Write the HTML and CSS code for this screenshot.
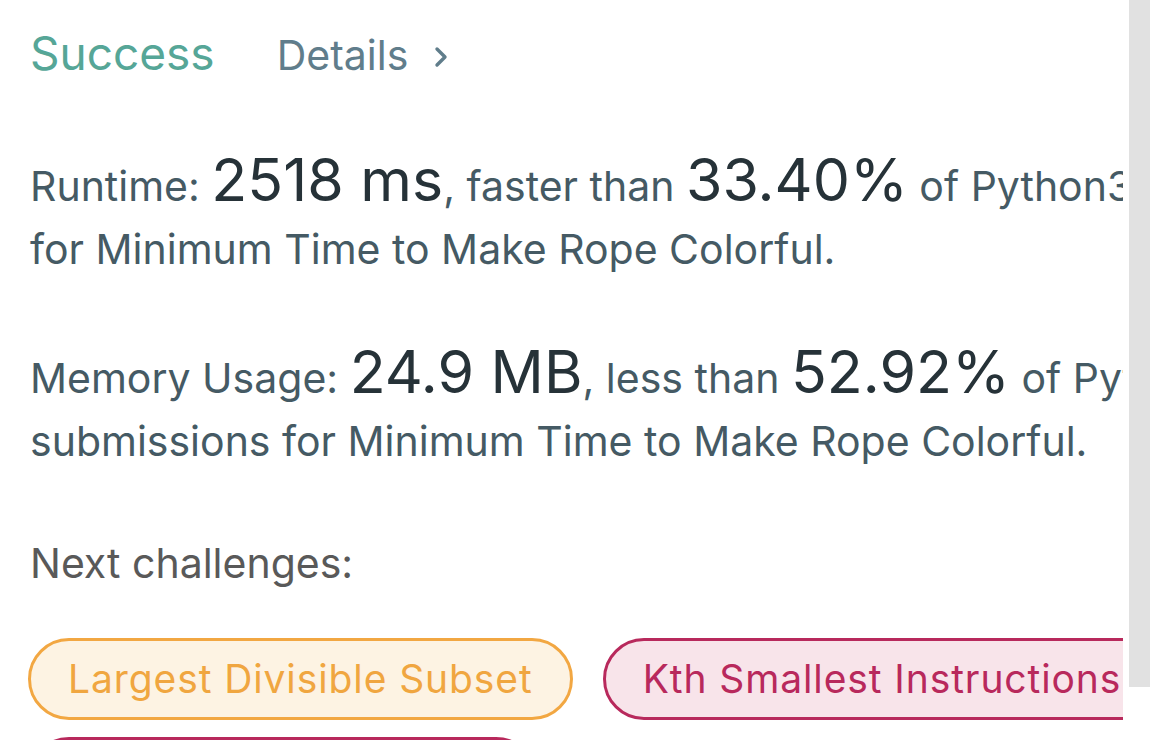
FILE: index.html
```html
<!DOCTYPE html>
<html>
<head>
<meta charset="utf-8">
<link rel="stylesheet" href="styles.css">
</head>
<body>
<div class="page">
  <div class="content">
    <div class="header">
      <span class="success">Success</span>
      <a class="details">Details
        <svg class="chev" width="14" height="22" viewBox="0 0 14 22"><path d="M3 3 L11 11 L3 19" fill="none" stroke="#607d8b" stroke-width="3.4" stroke-linecap="round" stroke-linejoin="round"/></svg>
      </a>
    </div>
    <p class="stat">Runtime: <span class="big">2518 ms</span>, faster than <span class="big">33.40%</span> of Python3 online submissions for Minimum Time to Make Rope Colorful.</p>
    <p class="stat">Memory Usage: <span class="big">24.9 MB</span>, less than <span class="big">52.92%</span> of Python3 online submissions for Minimum Time to Make Rope Colorful.</p>
    <p class="next">Next challenges:</p>
    <div class="pills">
      <span class="pill medium">Largest Divisible Subset</span>
      <span class="pill hard">Kth Smallest Instructions</span>
      <span class="pill hard">Cherry Pickup Paths II</span>
    </div>
  </div>
  <div class="scrolltrack"><div class="thumb"></div></div>
</div>
</body>
</html>
```
FILE: styles.css
```css
html, body {
  margin: 0;
  padding: 0;
  background: #ffffff;
  overflow: hidden;
}
body {
  font-family: Inter, Roboto, "Liberation Sans", sans-serif;
  width: 1150px;
  height: 740px;
}
.page {
  display: flex;
  width: 1150px;
  height: 740px;
}
.content {
  width: 1093px;
  padding-left: 30px;
  overflow: hidden;
  flex: none;
}
.header {
  display: flex;
  align-items: baseline;
  padding-top: 22px;
  height: 63px;
  line-height: 63px;
  white-space: nowrap;
}
.success {
  font-size: 46px;
  color: #56a697;
}
.details {
  margin-left: 62px;
  font-size: 41px;
  color: #607d8b;
  display: inline-flex;
  align-items: baseline;
}
.chev {
  margin-left: 26px;
  align-self: center;
  position: relative;
  top: 1px;
}
.stat {
  margin: 63px 0 0 0;
  font-size: 41px;
  line-height: 63px;
  color: #455a64;
  width: 1490px;
  white-space: normal;
}
.stat + .stat {
  margin-top: 59px;
}
.big {
  font-size: 59px;
  color: #263238;
}
.next {
  margin: 59px 0 0 0;
  font-size: 41px;
  line-height: 63px;
  color: #595959;
}
.pills {
  margin-top: 43px;
  margin-left: -2px;
  display: flex;
  flex-wrap: wrap;
  gap: 17px 30px;
  width: 1200px;
}
.pill {
  display: inline-block;
  box-sizing: border-box;
  height: 82px;
  line-height: 76px;
  padding: 0 37px;
  border: 3px solid;
  border-radius: 41px;
  font-size: 39px;
  letter-spacing: 0.9px;
  white-space: nowrap;
}
.medium {
  color: #f0a640;
  border-color: #f2a742;
  background: #fdf3e3;
}
.hard {
  color: #b8295c;
  border-color: #b8295c;
  background: #f8e4ea;
}
.scrolltrack {
  margin-left: 6px;
  width: 21px;
  flex: none;
}
.thumb {
  width: 21px;
  height: 687px;
  background: #e1e1e1;
}
```
